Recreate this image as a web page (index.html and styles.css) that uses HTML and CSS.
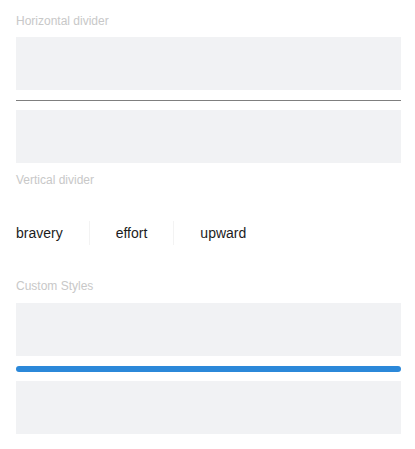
FILE: index.html
```html
<!DOCTYPE html>
<html>
<head>
<meta charset="utf-8">
<link rel="stylesheet" href="styles.css">
</head>
<body>
<div class="page">
  <div class="title title-first">Horizontal divider</div>
  <div class="block"></div>
  <div class="hdivider"></div>
  <div class="block"></div>

  <div class="title">Vertical divider</div>
  <div class="vrow">
    <span class="word">bravery</span>
    <span class="vdivider"></span>
    <span class="word">effort</span>
    <span class="vdivider"></span>
    <span class="word">upward</span>
  </div>

  <div class="title title-custom">Custom Styles</div>
  <div class="block"></div>
  <div class="bar"></div>
  <div class="block"></div>
</div>
</body>
</html>
```

FILE: styles.css
```css
html, body {
  margin: 0;
  padding: 0;
  background: #ffffff;
}

.page {
  width: 385px;
  padding: 13px 0 0 16px;
  font-family: "Liberation Sans", Arial, sans-serif;
}

.title {
  font-size: 12px;
  line-height: 16px;
  color: #c8c8c8;
  margin-top: 9px;
  margin-bottom: 8px;
}

.title-first {
  margin-top: 0;
}

.title-custom {
  margin-top: 33px;
  margin-bottom: 9px;
}

.block {
  height: 53px;
  background: #f1f2f4;
}

.hdivider {
  height: 1px;
  background: #7f7f7f;
  margin: 10px 0 9px;
}

.bar {
  height: 6px;
  border-radius: 3px;
  background: #2b88d9;
  margin: 10px 0 9px;
}

.vrow {
  display: flex;
  align-items: center;
  margin-top: 33px;
  height: 24px;
}

.word {
  font-size: 14px;
  line-height: 20px;
  color: #1c1c1c;
}

.vdivider {
  width: 1px;
  height: 24px;
  background: #f3f3f3;
  margin: 0 26px;
}
```
